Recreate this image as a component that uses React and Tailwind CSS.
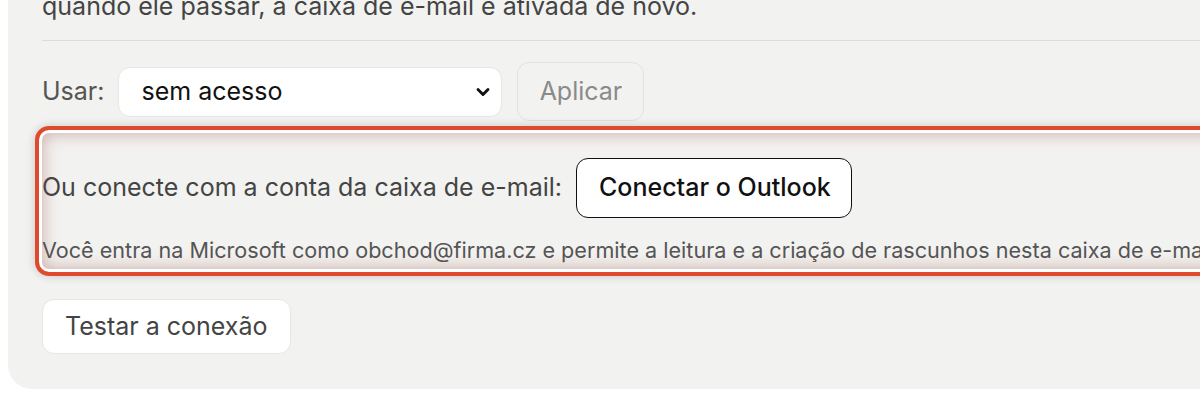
import { ChevronDown } from 'lucide-react'

/* ── Outlook connect section ─────────────────────────── */
function HighlightBox({ children }) {
  return (
    <div className="relative -ml-[7px] pl-[7px] pt-[32px] pb-[12px]">
      {children}
      <div className="pointer-events-none absolute inset-0 rounded-[14px] border-4 border-[#df4a2e] shadow-[0_0_10px_rgba(0,0,0,0.18),inset_0_0_0_3px_#ffffff,inset_0_0_16px_4px_rgba(150,70,60,0.38)]" />
    </div>
  )
}

export default function App() {
  return (
    <div className="h-[400px] w-[1200px] overflow-hidden bg-white font-['Inter',sans-serif]">
      <div className="ml-[8px] -mt-[10px] w-[1260px] rounded-b-[24px] bg-[#f2f2f0] pl-[34px] pb-[35px]">
        <p className="text-[25px] leading-[32px] text-[#444]">
          quando ele passar, a caixa de e-mail é ativada de novo.
        </p>
        <div className="mt-[18px] border-t border-[#dcdcda]" />

        {/* Usar row */}
        <div className="mt-[21px] flex items-center">
          <span className="text-[25px] text-[#555]">Usar:</span>
          <div className="ml-[14px] flex h-[50px] w-[384px] items-center justify-between rounded-[12px] border border-[#e6e6e4] bg-white pl-[22px] pr-[8px]">
            <span className="text-[25px] text-[#111]">sem acesso</span>
            <ChevronDown size={20} strokeWidth={3.4} className="text-[#111]" />
          </div>
          <button className="ml-[15px] h-[59px] w-[127px] rounded-[12px] border border-[#e2e2e0] text-[25px] text-[#8a8a8a]">
            Aplicar
          </button>
        </div>

        <div className="mt-[5px]">
          <HighlightBox>
            <div className="flex items-center">
              <span className="text-[25px] text-[#444]">Ou conecte com a conta da caixa de e-mail:</span>
              <button className="ml-[14px] h-[60px] rounded-[12px] border-[1.5px] border-[#111] bg-white pl-[22px] pr-[20px] text-[25px] font-medium text-[#111]">
                Conectar o Outlook
              </button>
            </div>
            <p className="mt-[18px] whitespace-nowrap text-[21.6px] leading-[28px] text-[#555]">
              Você entra na Microsoft como obchod@firma.cz e permite a leitura e a criação de rascunhos nesta caixa de e-mail.
            </p>
          </HighlightBox>
        </div>

        <button className="mt-[23px] h-[55px] rounded-[12px] border border-[#e6e6e4] bg-white px-[22px] text-[25px] text-[#444]">
          Testar a conexão
        </button>
      </div>
    </div>
  )
}
